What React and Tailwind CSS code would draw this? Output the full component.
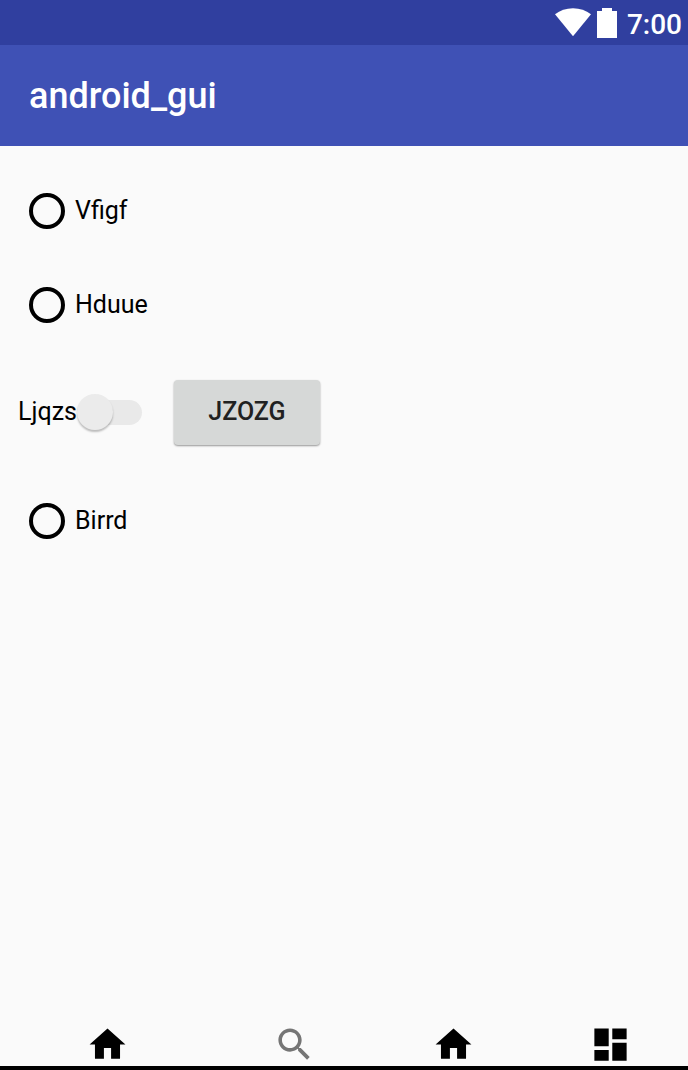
import React from "react";

const HOME = "M10 20v-6h4v6h5v-8h3L12 3 2 12h3v8z";
const SEARCH =
  "M15.5 14h-.79l-.28-.27C15.41 12.59 16 11.11 16 9.5 16 5.91 13.09 3 9.5 3S3 5.91 3 9.5 5.91 16 9.5 16c1.61 0 3.09-.59 4.23-1.57l.27.28v.79l5 4.99L20.49 19l-4.99-5zm-6 0C7.01 14 5 11.99 5 9.5S7.01 5 9.5 5 14 7.01 14 9.5 11.99 14 9.5 14z";
const DASHBOARD = "M3 13h8V3H3v10zm0 8h8v-6H3v6zm10 0h8V11h-8v10zm0-18v6h8V3h-8z";

function StatusBar() {
  return (
    <div className="flex h-[45px] items-center justify-end bg-[#303f9f] pr-1.5 text-white">
      <svg className="mr-1.5 h-[30px] w-9" viewBox="0 0 36 30" fill="currentColor" aria-hidden="true">
        <path d="M0 6.2C5 2.3 11.2.2 18 .2s13 2.1 18 6L18 28.2z" />
      </svg>
      <svg className="mr-2.5 h-[30px] w-5" viewBox="0 0 20 30" fill="currentColor" aria-hidden="true">
        <path d="M5 0h10v3h5v27H0V3h5z" />
      </svg>
      <time className="pt-1 text-[28px] leading-8 font-medium">7:00</time>
    </div>
  );
}

function RadioRow({ label }) {
  return (
    <label className="flex h-[94px] items-center gap-2.5 px-[29px]">
      <input
        type="radio"
        name={label}
        className="size-9 shrink-0 appearance-none rounded-full border-4 border-black checked:bg-black checked:bg-clip-content checked:p-1.5"
      />
      <span>{label}</span>
    </label>
  );
}

function SwitchRow() {
  return (
    <div className="flex h-[122px] items-center pb-0.5 pl-[18px]">
      <label className="flex items-center">
        <span>Ljqzs</span>
        <input
          type="checkbox"
          role="switch"
          className="flex h-[25px] w-[65px] appearance-none items-center rounded-full bg-[#e9e9e9] before:size-9 before:shrink-0 before:rounded-full before:bg-[#ebebeb] before:shadow-[0_2px_2px_rgba(0,0,0,0.25)] checked:justify-end"
        />
      </label>
      <button
        type="button"
        className="ml-8 h-[65px] w-[146px] rounded-[4px] bg-[#d6d8d7] font-medium text-[#212121] shadow-[0_1px_2px_rgba(0,0,0,0.4)]"
      >
        JZOZG
      </button>
    </div>
  );
}

function NavButton({ label, path, muted }) {
  return (
    <button
      type="button"
      aria-label={label}
      className={muted ? "flex justify-center text-[#757575]" : "flex justify-center text-black"}
    >
      <svg className="size-[43px]" viewBox="0 0 24 24" fill="currentColor" aria-hidden="true">
        <path d={path} />
      </svg>
    </button>
  );
}

export default function App() {
  return (
    <div className="flex min-h-screen flex-col bg-[#fafafa] font-[Roboto,sans-serif] text-[25px] leading-[30px] text-black">
      <StatusBar />
      <header className="flex h-[101px] items-center bg-[#3f51b5] px-[29px]">
        <h1 className="text-[36px] leading-10 font-medium text-white">android_gui</h1>
      </header>
      <main className="grow pt-[18px]">
        <RadioRow label="Vfigf" />
        <RadioRow label="Hduue" />
        <SwitchRow />
        <RadioRow label="Birrd" />
      </main>
      <nav className="grid grid-cols-[215fr_159fr_159fr_155fr] border-b-4 border-black">
        <NavButton label="Home" path={HOME} />
        <NavButton label="Search" path={SEARCH} muted />
        <NavButton label="Main" path={HOME} />
        <NavButton label="Dashboard" path={DASHBOARD} />
      </nav>
    </div>
  );
}
